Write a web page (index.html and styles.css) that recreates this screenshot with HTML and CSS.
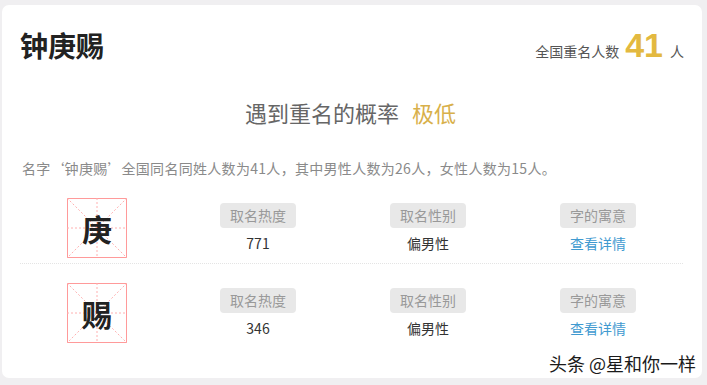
FILE: index.html
```html
<!DOCTYPE html>
<html lang="zh-CN">
<head>
<meta charset="utf-8">
<title>钟庚赐</title>
<link rel="stylesheet" href="styles.css">
</head>
<body>
<div class="card">
  <div class="header">
    <h1 class="name">钟庚赐</h1>
    <div class="count">全国重名人数<span class="num">41</span>人</div>
  </div>
  <div class="prob">遇到重名的概率<span class="level">极低</span></div>
  <p class="summary">名字<span class="q ql">‘</span>钟庚赐<span class="q qr">’</span>全国同名同姓人数为41人，其中男性人数为26人，女性人数为15人。</p>

  <div class="row">
    <div class="cell char-cell">
      <div class="charbox">
        <svg class="grid" viewBox="0 0 60 60" width="60" height="60">
          <rect x="0.5" y="0.5" width="59" height="59" fill="none" stroke="#ff9a9a" stroke-width="1"/>
          <line x1="0" y1="0" x2="60" y2="60" stroke="#ffb0b0" stroke-width="1" stroke-dasharray="2 2"/>
          <line x1="60" y1="0" x2="0" y2="60" stroke="#ffb0b0" stroke-width="1" stroke-dasharray="2 2"/>
          <line x1="30" y1="0" x2="30" y2="60" stroke="#ffb0b0" stroke-width="1" stroke-dasharray="2 2"/>
          <line x1="0" y1="30" x2="60" y2="30" stroke="#ffb0b0" stroke-width="1" stroke-dasharray="2 2"/>
        </svg>
        <span class="ch">庚</span>
      </div>
    </div>
    <div class="cell info"><span class="pill">取名热度</span><span class="val">771</span></div>
    <div class="cell info"><span class="pill">取名性别</span><span class="val">偏男性</span></div>
    <div class="cell info"><span class="pill">字的寓意</span><a class="val link" href="#">查看详情</a></div>
  </div>

  <div class="row last">
    <div class="cell char-cell">
      <div class="charbox">
        <svg class="grid" viewBox="0 0 60 60" width="60" height="60">
          <rect x="0.5" y="0.5" width="59" height="59" fill="none" stroke="#ff9a9a" stroke-width="1"/>
          <line x1="0" y1="0" x2="60" y2="60" stroke="#ffb0b0" stroke-width="1" stroke-dasharray="2 2"/>
          <line x1="60" y1="0" x2="0" y2="60" stroke="#ffb0b0" stroke-width="1" stroke-dasharray="2 2"/>
          <line x1="30" y1="0" x2="30" y2="60" stroke="#ffb0b0" stroke-width="1" stroke-dasharray="2 2"/>
          <line x1="0" y1="30" x2="60" y2="30" stroke="#ffb0b0" stroke-width="1" stroke-dasharray="2 2"/>
        </svg>
        <span class="ch">赐</span>
      </div>
    </div>
    <div class="cell info"><span class="pill">取名热度</span><span class="val">346</span></div>
    <div class="cell info"><span class="pill">取名性别</span><span class="val">偏男性</span></div>
    <div class="cell info"><span class="pill">字的寓意</span><a class="val link" href="#">查看详情</a></div>
  </div>

  <div class="watermark">头条 @星和你一样</div>
</div>
</body>
</html>
```

FILE: styles.css
```css
html, body {
  margin: 0;
  padding: 0;
}
body {
  background: #f0eff1;
  font-family: "Noto Sans CJK SC", "Noto Sans", sans-serif;
  width: 707px;
  height: 385px;
  overflow: hidden;
}
.card {
  position: relative;
  box-sizing: border-box;
  margin: 5px 0 0 2px;
  width: 700px;
  height: 373px;
  background: #fff;
  border-radius: 7px;
  padding: 20px 17px 0 18px;
}
.header {
  display: flex;
  justify-content: space-between;
  align-items: baseline;
  height: 40px;
}
.name {
  margin: 0;
  font-size: 28px;
  line-height: 40px;
  font-weight: 700;
  color: #222;
}
.count {
  font-size: 14px;
  color: #555;
  padding-right: 1px;
}
.num {
  font-family: "Liberation Sans", Arial, sans-serif;
  font-size: 34px;
  font-weight: 700;
  color: #e3b940;
  margin: 0 7px 0 6px;
}
.prob {
  margin-top: 32px;
  text-align: center;
  font-size: 22px;
  line-height: 30px;
  color: #666;
  padding-right: 4px;
}
.level {
  color: #d8b04a;
  margin-left: 13px;
}
.summary {
  margin: 31px 0 1px 2px;
  font-size: 14px;
  line-height: 20px;
  letter-spacing: 0.3px;
  color: #8a8a8a;
}
.q {
  display: inline-block;
  width: 14px;
}
.ql {
  text-align: right;
  padding-right: 1px;
  width: 13px;
}
.qr {
  text-align: left;
}
.row {
  display: grid;
  grid-template-columns: 152px 172px 168px 172px;
  padding: 19px 0 5px;
  border-bottom: 1px dotted #e4e4e4;
  margin-right: 2px;
}
.row.last {
  border-bottom: none;
}
.cell {
  display: flex;
  flex-direction: column;
  align-items: center;
}
.char-cell {
  padding-left: 2px;
}
.charbox {
  position: relative;
  width: 60px;
  height: 60px;
  display: flex;
  align-items: center;
  justify-content: center;
}
.grid {
  position: absolute;
  left: 0;
  top: 0;
}
.ch {
  position: relative;
  font-size: 30px;
  font-weight: 700;
  color: #222;
  line-height: 1;
}
.info {
  padding-top: 5px;
}
.pill {
  display: block;
  height: 25px;
  line-height: 25px;
  padding: 0 10px;
  background: #e8e8e8;
  border-radius: 4px;
  color: #999;
  font-size: 14px;
}
.val {
  margin-top: 5px;
  font-size: 14px;
  line-height: 20px;
  color: #333;
}
.link {
  color: #3f9ad0;
  text-decoration: none;
}
.watermark {
  position: absolute;
  right: 6px;
  bottom: 3px;
  font-size: 18px;
  line-height: 24px;
  color: #1a1a1a;
  text-shadow: 0 0 2px #fff, 0 0 2px #fff;
}
```
